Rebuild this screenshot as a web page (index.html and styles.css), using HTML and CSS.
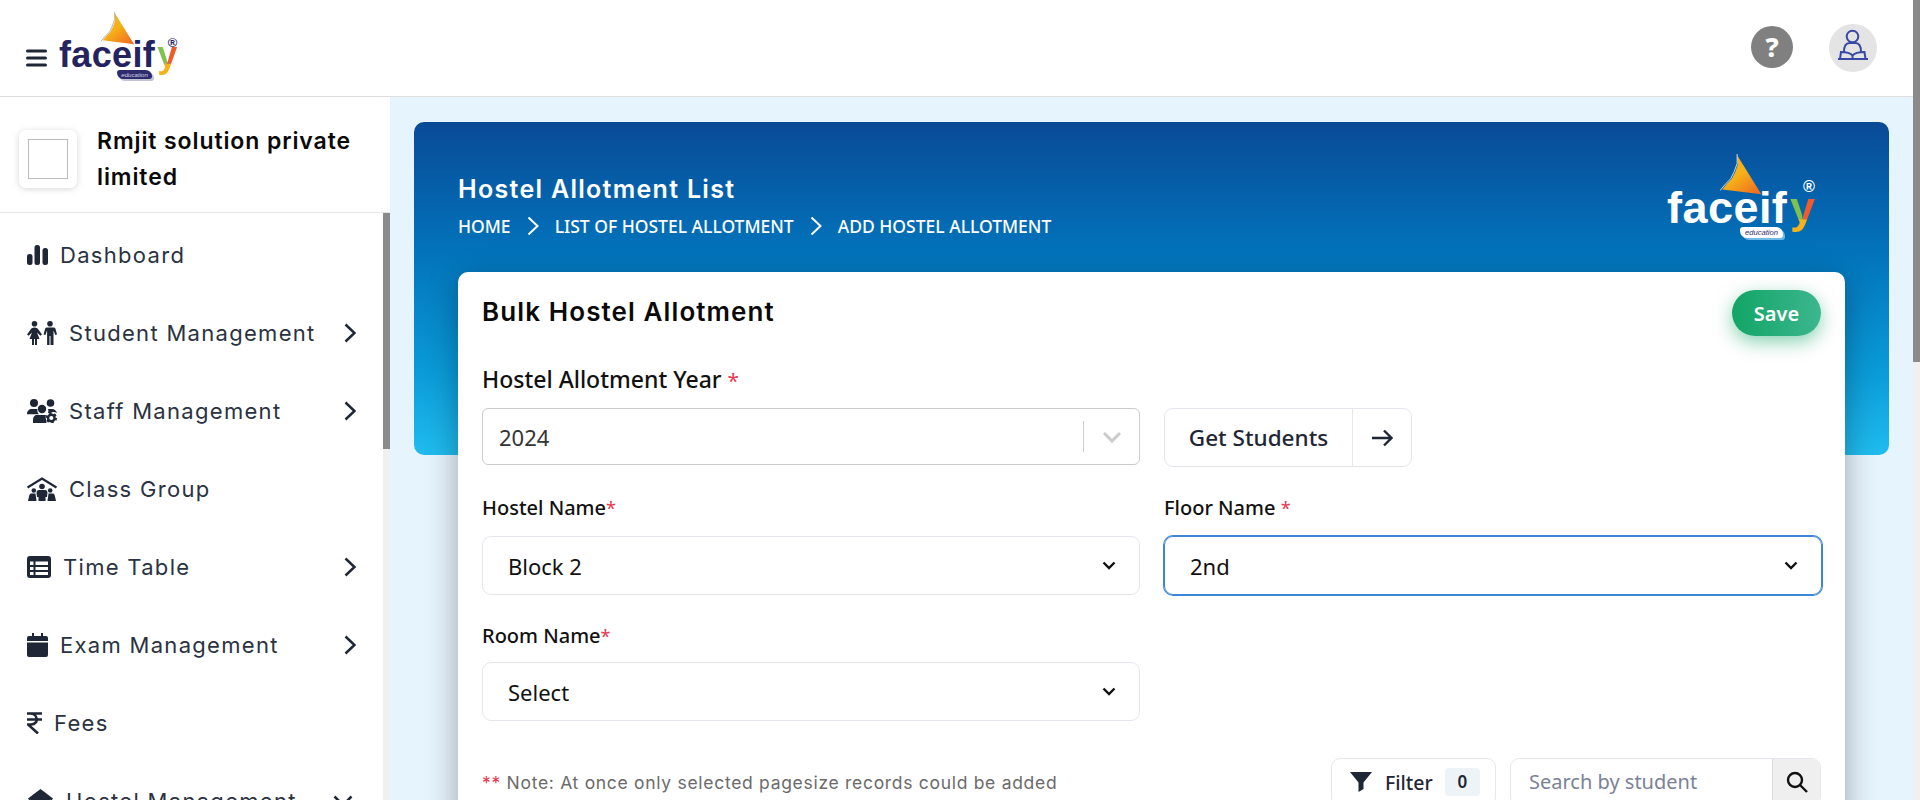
FILE: index.html
```html
<!DOCTYPE html>
<html lang="en">

<head>
  <meta charset="UTF-8">
  <meta name="viewport" content="width=device-width, initial-scale=1.0">
  <title>Hostel Allotment List</title>
  <link rel="stylesheet" href="styles.css">
</head>

<body>
  <div class="page">
    <div class="app">
      <header class="topbar">
        <svg class="burger" viewBox="0 0 21 18"><path d="M1.500 2h18M1.500 9h18M1.500 16h18" /></svg>
        <div class="logo">
          <svg class="logo-wing" viewBox="0 0 40 40"><defs><linearGradient id="wing1" x1="0.2" y1="0.1" x2="0.9" y2="1"><stop offset="0.4" stop-color="#f6b118" /><stop offset="1" stop-color="#ef6a20" /></linearGradient></defs><path d="M14.500 1 L15 9 L13 15 L10 21 L6 25 L2 30 L35 34 Z" fill="url(#wing1)" /><path d="M14.500 0V8L12 15 9 21 5 25 0 31" fill="none" stroke="#9a9aa8" stroke-width="0.8" /></svg>
          <span class="logo-text">faceif</span><span class="logo-y">y</span>
          <span class="logo-reg">®</span>
          <span class="logo-tag">education</span>
        </div>
        <div class="topbar-right">
          <span class="help">?</span>
          <span class="avatar">
            <svg viewBox="0 0 48 48"><circle cx="23.500" cy="12.500" r="5.800" /><path d="M15 28c0-5.500 2-9 5.500-9h6c3.500 0 5.500 3.500 5.500 9" /><path d="M9 35h30M11 35l1-7c4 0 9 .5 11.500 3.500C26 28.500 31 28 35.500 28l1 7M23.500 31.500V35" /></svg>
          </span>
        </div>
      </header>

      <div class="layout">
        <aside class="sidebar">
          <div class="org">
            <div class="org-logo"><div class="org-logo-inner"></div></div>
            <div class="org-name">Rmjit solution private limited</div>
          </div>
          <div class="nav-wrap">
            <ul class="nav">
              <li>
                <svg class="nav-icon" width="21" height="20" viewBox="0 0 21 20"><rect x="0" y="9" width="5.500" height="11" rx="2.500" /><rect x="7.500" y="0" width="5.500" height="20" rx="2.500" /><rect x="15.500" y="3" width="5.500" height="17" rx="2.500" /></svg>
                <span>Dashboard</span>
              </li>
              <li>
                <svg class="nav-icon" width="30" height="24" viewBox="0 0 30 24"><circle cx="7.500" cy="2.800" r="2.800" /><circle cx="23" cy="2.800" r="2.800" /><path d="M7.500 6.500c-2 0-3 .8-3.700 1.800L0 13.500l1.600 1.200L5 11.500 2.500 18H5v6h2v-6h1v6h2v-6h2.500L10 11.500l3.400 3.200 1.600-1.200-3.800-5.200C10.500 7.300 9.500 6.500 7.500 6.500z" /><path d="M19.500 6.500h7c1 0 1.500.4 2 1.200l1.500 5.800-1.700.6-1.800-4.600V24H23.500v-9h-1v9h-2.400V9.500l-1.800 4.600-1.700-.6 1.500-5.800c.4-.8 1-1.200 2.400-1.200z" /></svg>
                <span>Student Management</span>
                <svg class="nav-chevron" viewBox="0 0 12 20"><path d="M1.500 1.500 10.500 10l-9 8.500" /></svg>
              </li>
              <li>
                <svg class="nav-icon" width="30" height="24" viewBox="0 0 30 24"><circle cx="7" cy="4" r="4" /><circle cx="23.500" cy="4" r="3.800" /><circle cx="15" cy="10" r="4.200" /><path d="M0 15c0-3 2-5 5-5h4c.6 0 1 .1 1.500.3-.5 2 .3 4 1.500 5H0z" /><path d="M21 10h4c2.500 0 4.500 1.800 5 4-2-1.500-5-1.500-7 0-.5.5-1.500.4-2-.2.500-1.200.5-2.600 0-3.800z" /><path d="M9.500 16h9.500c-.5 1.500-.5 3 .2 5l.3 3H6v-3c0-2.500 1.500-5 3.500-5z" /><circle cx="24.300" cy="19" r="3.300" fill="none" stroke="#1f2635" stroke-width="2.400" /><circle cx="24.300" cy="19" r="4.800" fill="none" stroke="#1f2635" stroke-width="1.800" stroke-dasharray="2.400 2.600" /></svg>
                <span>Staff Management</span>
                <svg class="nav-chevron" viewBox="0 0 12 20"><path d="M1.500 1.500 10.500 10l-9 8.500" /></svg>
              </li>
              <li>
                <svg class="nav-icon" width="30" height="24" viewBox="0 0 30 24"><path d="M.5 10.500 15 1.500l14.500 9" fill="none" stroke="#1f2635" stroke-width="2.200" /><circle cx="15" cy="9.500" r="2.800" /><circle cx="6.800" cy="13.500" r="2.300" /><circle cx="23.200" cy="13.500" r="2.300" /><path d="M11.800 13h6.400c1.500 0 2 1 2.300 2.500L20 20h-1.500v4h-7v-4H10l-.5-4.500c.3-1.500.8-2.500 2.300-2.500z" /><path d="M4 16.500h4.500L9.500 24H1l1-4.500c.2-1.500 1-3 2-3zM21.500 16.500H26c1 0 1.800 1.500 2 3l1 4.500h-8.500z" /></svg>
                <span>Class Group</span>
              </li>
              <li>
                <svg class="nav-icon" width="24" height="22" viewBox="0 0 24 22"><path fill-rule="evenodd" d="M3 0h18a3 3 0 0 1 3 3v16a3 3 0 0 1-3 3H3a3 3 0 0 1-3-3V3a3 3 0 0 1 3-3zM3 5.500V9h3.500V5.500zM8.500 5.500V9H21V5.500zM3 11v3h3.500v-3zM8.500 11v3H21v-3zM3 16v3h3.500v-3zM8.500 16v3H21v-3z" /></svg>
                <span>Time Table</span>
                <svg class="nav-chevron" viewBox="0 0 12 20"><path d="M1.500 1.500 10.500 10l-9 8.500" /></svg>
              </li>
              <li>
                <svg class="nav-icon" width="21" height="24" viewBox="0 0 21 24"><path d="M5 0h2v3h7V0h2v3h3a2 2 0 0 1 2 2v3H0V5a2 2 0 0 1 2-2h3zM0 9.500h21V22a2 2 0 0 1-2 2H2a2 2 0 0 1-2-2z" /></svg>
                <span>Exam Management</span>
                <svg class="nav-chevron" viewBox="0 0 12 20"><path d="M1.500 1.500 10.500 10l-9 8.500" /></svg>
              </li>
              <li>
                <svg class="nav-icon nav-icon-line" width="15" height="22" viewBox="0 0 15 22"><path d="M0 1.500h15M0 7.500h15M3 1.500c8 0 9.500 10.500 1 11H1L11 21.500" /></svg>
                <span>Fees</span>
              </li>
              <li class="nav-open">
                <svg class="nav-icon" width="27" height="24" viewBox="0 0 27 24"><path d="M13.500 0 26 9.500l-1.500 2L23 10.500V24H4V10.500l-1.500 1L1 9.500z" /></svg>
                <span>Hostel Management</span>
                <svg class="nav-chevron-down" viewBox="0 0 20 12"><path d="M1.500 1.500 10 10l8.500-8.500" /></svg>
              </li>
            </ul>
            <div class="side-scroll"><div class="side-thumb"></div></div>
          </div>
        </aside>

        <main class="main">
          <section class="banner">
            <div class="banner-head">
              <div>
                <h1 class="banner-title">Hostel Allotment List</h1>
                <div class="crumbs">
                  <span>HOME</span>
                  <svg viewBox="0 0 12 20"><path d="M1.500 1.500 10.500 10l-9 8.500" /></svg>
                  <span>LIST OF HOSTEL ALLOTMENT</span>
                  <svg viewBox="0 0 12 20"><path d="M1.500 1.500 10.500 10l-9 8.500" /></svg>
                  <span>ADD HOSTEL ALLOTMENT</span>
                </div>
              </div>
              <div class="logo logo-big">
                <svg class="logo-wing" viewBox="0 0 40 40"><defs><linearGradient id="wing2" x1="0.2" y1="0.1" x2="0.9" y2="1"><stop offset="0.4" stop-color="#f6b118" /><stop offset="1" stop-color="#ef6a20" /></linearGradient></defs><path d="M14.500 1 L15 9 L13 15 L10 21 L6 25 L2 30 L35 34 Z" fill="url(#wing2)" /><path d="M14.500 0V8L12 15 9 21 5 25 0 31" fill="none" stroke="#cfe6f5" stroke-width="0.8" /></svg>
                <span class="logo-text">faceif</span><span class="logo-y">y</span>
                <span class="logo-reg">®</span>
                <span class="logo-tag">education</span>
              </div>
            </div>
          </section>

          <section class="card">
            <div class="card-head">
              <h2 class="card-title">Bulk Hostel Allotment</h2>
              <button class="btn-save">Save</button>
            </div>

            <div class="form-grid">
              <div class="field">
                <label class="label-year">Hostel Allotment Year <i>*</i></label>
                <div class="rselect">
                  <span>2024</span>
                  <div class="rselect-sep"></div>
                  <svg viewBox="0 0 20 12"><path d="M2 2l8 8 8-8" /></svg>
                </div>
              </div>
              <div class="btn-group">
                <span class="btn-text">Get Students</span>
                <span class="btn-arrow"><svg viewBox="0 0 22 18"><path d="M1 9h19M13 1.500 20.500 9 13 16.500" /></svg></span>
              </div>

              <div class="field">
                <label>Hostel Name<i>*</i></label>
                <div class="select">
                  <span>Block 2</span>
                  <svg viewBox="0 0 14 9"><path d="M1.500 1.500 7 7l5.500-5.500" /></svg>
                </div>
              </div>
              <div class="field">
                <label>Floor Name <i>*</i></label>
                <div class="select select-focus">
                  <span>2nd</span>
                  <svg viewBox="0 0 14 9"><path d="M1.500 1.500 7 7l5.500-5.500" /></svg>
                </div>
              </div>

              <div class="field field-room">
                <label>Room Name<i>*</i></label>
                <div class="select">
                  <span>Select</span>
                  <svg viewBox="0 0 14 9"><path d="M1.500 1.500 7 7l5.500-5.500" /></svg>
                </div>
              </div>
            </div>

            <div class="toolbar">
              <p class="note"><i>**</i> Note: At once only selected pagesize records could be added</p>
              <div class="toolbar-right">
                <div class="btn-filter">
                  <svg viewBox="0 0 22 20"><path d="M0 0h22L13.500 10.500V17L8.500 20V10.500z" /></svg>
                  <span>Filter</span>
                  <b>0</b>
                </div>
                <div class="search">
                  <span class="search-input">Search by student</span>
                  <span class="search-btn"><svg viewBox="0 0 22 22"><circle cx="9" cy="9" r="7" /><path d="M14 14l7 7" /></svg></span>
                </div>
              </div>
            </div>
          </section>
        </main>
      </div>
    </div>
    <div class="page-scroll"><div class="page-thumb"></div></div>
  </div>
</body>

</html>
```

FILE: styles.css
```css
html,
body {
  width: 100%;
  height: 100%;
  margin: 0;
  padding: 0;
  overflow: hidden;
}

body {
  font-family: "Noto Sans", sans-serif;
  color: #1f2635;
}

h1,
h2,
p,
ul {
  margin: 0;
  padding: 0;
}

ul {
  list-style: none;
}

i {
  font-style: normal;
  font-weight: 400;
  color: #e8364f;
}

.page {
  display: flex;
  height: 800px;
}

.app {
  flex: 1;
  min-width: 0;
  display: flex;
  flex-direction: column;
}

.page-scroll {
  width: 7px;
  background: #f0f0f0;
}

.page-thumb {
  height: 362px;
  background: #8a8a8a;
}

/* top bar */
.topbar {
  height: 96px;
  flex: none;
  display: flex;
  align-items: center;
  background: #fff;
  border-bottom: 1px solid #dedede;
  padding-left: 26px;
}

.burger {
  width: 21px;
  height: 18px;
  fill: none;
  stroke: #1f2635;
  stroke-width: 3;
  stroke-linecap: round;
  margin-top: 20px;
}

.logo {
  position: relative;
  display: flex;
  align-items: baseline;
  font-size: 36px;
  line-height: 1;
  font-family: "Liberation Sans", sans-serif;
  font-weight: 700;
  color: #24225f;
  margin: 17px 0 0 12px;
}

.logo-text {
  letter-spacing: 0.01em;
}

.logo-y {
  margin-left: 0.06em;
  padding-bottom: 0.1em;
  color: transparent;
  background:
    linear-gradient(#7fc04f, #7fc04f) 0 0 / 50% 69% no-repeat,
    linear-gradient(#f15a29, #f15a29) 100% 0 / 50% 69% no-repeat,
    linear-gradient(#f5b21a, #f5b21a) 0 100% / 100% 31% no-repeat;
  -webkit-background-clip: text;
  background-clip: text;
}

.logo-wing {
  position: absolute;
  left: 1.18em;
  top: -0.7em;
  width: 1.05em;
  height: 1.05em;
}

.logo-reg {
  position: absolute;
  left: 8.4em;
  top: 0;
  font-size: 0.36em;
  font-weight: 700;
}

.logo-tag {
  position: absolute;
  left: 9.5em;
  top: 5.5em;
  width: 5.7em;
  height: 1.48em;
  font-size: 0.17em;
  font-style: italic;
  font-weight: 400;
  line-height: 1.48em;
  text-align: center;
  color: #d5d5e6;
  background: #2f2c6e;
  border-radius: 3px 7px 3px 7px;
  box-shadow: 2px 2px 0 #c3c3d6;
}

.topbar-right {
  margin-left: auto;
  display: flex;
  align-items: center;
  gap: 36px;
  padding-right: 36px;
}

.help {
  width: 42px;
  height: 42px;
  margin-top: -2px;
  border-radius: 50%;
  background: #808080;
  color: #fff;
  font-size: 27px;
  font-weight: 800;
  line-height: 42px;
  text-align: center;
}

.avatar {
  width: 48px;
  height: 48px;
  border-radius: 50%;
  background: #e4e4e4;
}

.avatar svg {
  display: block;
  fill: none;
  stroke: #3a48a5;
  stroke-width: 2;
}

/* sidebar */
.layout {
  flex: 1;
  min-height: 0;
  display: flex;
}

.sidebar {
  width: 390px;
  flex: none;
  display: flex;
  flex-direction: column;
  background: #fff;
}

.org {
  height: 116px;
  flex: none;
  box-sizing: border-box;
  display: flex;
  align-items: center;
  gap: 20px;
  padding: 8px 0 0 19px;
  border-bottom: 1px solid #e6e6e6;
}

.org-logo {
  width: 58px;
  height: 58px;
  flex: none;
  display: flex;
  align-items: center;
  justify-content: center;
  border-radius: 7px;
  box-shadow: 0 1px 6px rgba(0, 0, 0, 0.16);
}

.org-logo-inner {
  width: 38px;
  height: 38px;
  border: 1px solid #bcbcbc;
}

.org-name {
  width: 285px;
  font-family: Inter, sans-serif;
  font-size: 23px;
  font-weight: 600;
  letter-spacing: 0.9px;
  line-height: 36px;
  color: #0a0a0a;
}

.nav-wrap {
  flex: 1;
  min-height: 0;
  display: flex;
}

.nav {
  flex: 1;
  min-width: 0;
  padding-top: 3px;
  overflow: hidden;
}

.nav li {
  height: 78px;
  display: flex;
  align-items: center;
  gap: 12px;
  padding: 0 27px;
  font-family: Inter, sans-serif;
  font-size: 22px;
  letter-spacing: 1.3px;
  color: #2a3242;
}

.nav-icon {
  flex: none;
  fill: #1f2635;
}

.nav-icon-line {
  fill: none;
  stroke: #1f2635;
  stroke-width: 2.600;
}

.nav-chevron {
  width: 12px;
  height: 20px;
  margin-left: auto;
  flex: none;
  fill: none;
  stroke: #1f2635;
  stroke-width: 2.500;
}

.nav-chevron-down {
  width: 20px;
  height: 12px;
  margin-left: auto;
  margin-right: 3px;
  flex: none;
  fill: none;
  stroke: #1f2635;
  stroke-width: 2.500;
}

.side-scroll {
  width: 7px;
  flex: none;
  background: #f0f0f0;
}

.side-thumb {
  height: 236px;
  background: #8a8a8a;
}

/* main */
.main {
  flex: 1;
  min-width: 0;
  overflow: hidden;
  padding: 25px 24px 0;
  background: #e6f4fd;
}

.banner {
  height: 333px;
  border-radius: 10px;
  background: linear-gradient(180deg, #0a4a96 0%, #0272ba 38%, #0a9bd8 75%, #20bcef 100%);
  padding: 0 44px;
  box-sizing: border-box;
}

.banner-head {
  height: 150px;
  display: flex;
  justify-content: space-between;
  padding-right: 30px;
}

.banner-title {
  margin-top: 49px;
  font-family: Inter, sans-serif;
  font-size: 25px;
  font-weight: 600;
  letter-spacing: 1.3px;
  line-height: 36px;
  color: #fff;
}

.crumbs {
  display: flex;
  align-items: center;
  gap: 16px;
  margin-top: 6px;
  font-size: 17.500px;
  font-weight: 500;
  line-height: 26px;
  color: #fff;
}

.crumbs svg {
  width: 12px;
  height: 20px;
  fill: none;
  stroke: #fff;
  stroke-width: 2;
}

.logo-big {
  font-size: 45px;
  color: #fff;
  margin: 63px 0 0;
  align-self: flex-start;
}

.logo-big .logo-reg {
  top: -0.45em;
}

.logo-big .logo-tag {
  color: #2f2c6e;
  background: #fff;
  box-shadow: 2px 2px 0 #6fb9e6;
}

.card {
  margin: -183px 44px 0;
  height: 600px;
  padding: 18px 24px 0;
  background: #fff;
  border-radius: 10px;
  box-shadow: 0 8px 32px rgba(0, 0, 0, 0.32);
}

.card-head {
  display: flex;
  align-items: center;
  justify-content: space-between;
  height: 46px;
}

.card-title {
  margin-top: -3px;
  font-family: Inter, sans-serif;
  font-size: 26px;
  font-weight: 600;
  letter-spacing: 1.1px;
  color: #0a0a0a;
}

.btn-save {
  width: 89px;
  height: 46px;
  border: 0;
  border-radius: 23px;
  background: linear-gradient(90deg, #12a566, #3cb68f);
  box-shadow: 0 6px 18px rgba(18, 165, 102, 0.5);
  color: #fff;
  font-family: "Noto Sans", sans-serif;
  font-size: 20px;
  font-weight: 600;
}

.form-grid {
  display: grid;
  grid-template-columns: 658px 658px;
  column-gap: 24px;
  row-gap: 29px;
  align-items: start;
  margin-top: 32px;
}

.field label {
  display: block;
  height: 24px;
  margin-bottom: 16px;
  font-size: 20px;
  font-weight: 500;
  line-height: 24px;
  color: #111;
}

.field label i {
  font-size: 0.9em;
}

.field label.label-year {
  margin-top: -1px;
  margin-bottom: 17px;
  font-size: 23px;
}

.field-room label {
  margin-bottom: 14px;
}

.rselect {
  height: 57px;
  box-sizing: border-box;
  display: flex;
  align-items: center;
  padding: 0 17px 0 16px;
  border: 1px solid #ccc;
  border-radius: 6px;
  font-size: 22px;
  color: #333;
}

.rselect-sep {
  width: 1px;
  height: 31px;
  margin-left: auto;
  background: #ccc;
}

.rselect svg {
  width: 20px;
  height: 12px;
  margin-left: 18px;
  fill: none;
  stroke: #ccc;
  stroke-width: 3;
}

.btn-group {
  height: 59px;
  margin-top: 40px;
  box-sizing: border-box;
  display: flex;
  width: 248px;
  border: 1px solid #e5e7ee;
  border-radius: 9px;
  font-size: 22.500px;
  font-weight: 500;
  color: #1f2635;
}

.btn-text {
  width: 188px;
  box-sizing: border-box;
  display: flex;
  align-items: center;
  justify-content: center;
  border-right: 1px solid #e5e7ee;
}

.btn-arrow {
  flex: 1;
  display: flex;
  align-items: center;
  justify-content: center;
}

.btn-arrow svg {
  width: 22px;
  height: 18px;
  fill: none;
  stroke: #1f2635;
  stroke-width: 2.400;
}

.select {
  height: 59px;
  box-sizing: border-box;
  display: flex;
  align-items: center;
  justify-content: space-between;
  padding: 0 23px 0 25px;
  border: 1px solid #e5e7ee;
  border-radius: 9px;
  font-size: 22px;
  color: #111;
}

.select svg {
  width: 14px;
  height: 9px;
  fill: none;
  stroke: #111;
  stroke-width: 2.400;
}

.select-focus {
  border-color: #3d85d8;
  box-shadow: 0 0 0 1px #3d85d8;
}

.toolbar {
  display: flex;
  align-items: center;
  justify-content: space-between;
  margin-top: 37px;
}

.note {
  font-family: Inter, sans-serif;
  font-size: 17.500px;
  letter-spacing: 0.7px;
  color: #6b6b6b;
}

.toolbar-right {
  display: flex;
  gap: 14px;
}

.btn-filter {
  width: 165px;
  height: 48px;
  box-sizing: border-box;
  display: flex;
  align-items: center;
  padding-left: 18px;
  border: 1px solid #e5e7ee;
  border-radius: 9px;
  font-size: 19.500px;
  font-weight: 500;
}

.btn-filter svg {
  width: 22px;
  height: 20px;
  fill: #1f2635;
  margin-right: 13px;
}

.btn-filter b {
  width: 35px;
  height: 28px;
  margin-left: 12px;
  border-radius: 4px;
  background: #eef3f8;
  font-size: 17px;
  font-weight: 600;
  line-height: 28px;
  text-align: center;
}

.search {
  width: 311px;
  height: 48px;
  box-sizing: border-box;
  display: flex;
  border: 1px solid #e5e7ee;
  border-radius: 9px;
  overflow: hidden;
}

.search-input {
  flex: 1;
  padding-left: 18px;
  font-size: 20px;
  line-height: 46px;
  color: #7a8296;
}

.search-btn {
  width: 47px;
  display: flex;
  align-items: center;
  justify-content: center;
  background: #efefef;
  border-left: 1px solid #dcdcdc;
}

.search-btn svg {
  width: 22px;
  height: 22px;
  fill: none;
  stroke: #111;
  stroke-width: 2.400;
}
```
